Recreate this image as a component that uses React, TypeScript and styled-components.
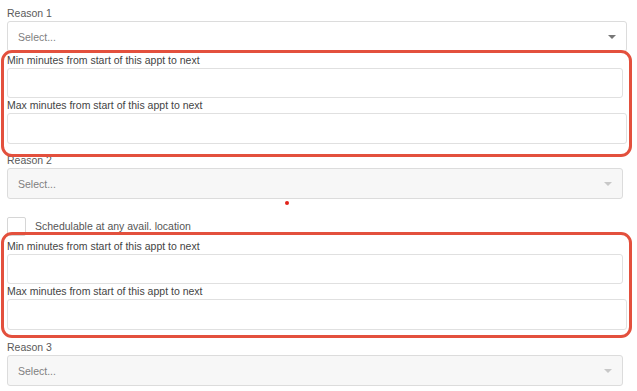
import React from "react";
import styled, { createGlobalStyle } from "styled-components";

const GlobalStyle = createGlobalStyle`
  html, body {
    margin: 0;
    padding: 0;
    background: #fff;
  }
  body {
    font-family: "Liberation Sans", Arial, sans-serif;
  }
`;

interface SelectProps {
  disabled?: boolean;
  width: number;
}

const Select: React.FC<SelectProps> = ({ disabled, width }) => (
  <SelectBox $disabled={disabled} $w={width}>
    <Placeholder>Select...</Placeholder>
    <Caret $disabled={disabled} />
  </SelectBox>
);

interface MinMaxProps {
  top: number;
  bottom: number;
  inputHeight: number;
}

const MinMax: React.FC<MinMaxProps> = ({ top, bottom, inputHeight }) => (
  <Group $top={top} $bottom={bottom}>
    <Label $dark>Min minutes from start of this appt to next</Label>
    <TextInput $w={616} $h={inputHeight} />
    <Label $dark>Max minutes from start of this appt to next</Label>
    <TextInput $w={620} $h={inputHeight + 1} />
  </Group>
);

export default function App() {
  return (
    <>
      <GlobalStyle />
      <Page>
        <Label>Reason 1</Label>
        <Select width={620} />
        <MinMax top={-3} bottom={13} inputHeight={30} />

        <Label $mt={9}>Reason 2</Label>
        <Select width={616} disabled />
        <DotRow>
          <Dot />
        </DotRow>
        <CheckRow>
          <CheckBox />
          <CheckText>Schedulable at any avail. location</CheckText>
        </CheckRow>
        <Spacer />
        <MinMax top={-7} bottom={8} inputHeight={30} />

        <Label $mt={10}>Reason 3</Label>
        <Select width={616} disabled />
      </Page>
    </>
  );
}

const Page = styled.div`
  display: flex;
  flex-direction: column;
  align-items: flex-start;
  width: 637px;
  height: 391px;
  padding: 6px 0 0 7px;
  box-sizing: border-box;
  overflow: hidden;
`;

const Label = styled.div<{ $dark?: boolean; $mt?: number }>`
  font-size: 10.5px;
  line-height: 14px;
  height: 14px;
  margin-top: ${(p) => p.$mt || 0}px;
  margin-bottom: 1px;
  color: ${(p) => (p.$dark ? "#444" : "#5a5a5a")};
  white-space: nowrap;
`;

const SelectBox = styled.div<{ $disabled?: boolean; $w: number }>`
  display: flex;
  align-items: center;
  justify-content: space-between;
  width: ${(p) => p.$w}px;
  height: 31px;
  padding: 0 10px 0 10px;
  box-sizing: border-box;
  border: 1px solid #dcdcdc;
  border-radius: 3px;
  background: ${(p) => (p.$disabled ? "#f7f7f7" : "#fff")};
`;

const Placeholder = styled.span`
  font-size: 10.5px;
  color: #808080;
`;

const Caret = styled.span<{ $disabled?: boolean }>`
  width: 0;
  height: 0;
  border-left: 4px solid transparent;
  border-right: 4px solid transparent;
  border-top: 4px solid ${(p) => (p.$disabled ? "#c8c8c8" : "#777")};
`;

const TextInput = styled.input<{ $w: number; $h: number }>`
  display: block;
  width: ${(p) => p.$w}px;
  height: ${(p) => p.$h}px;
  margin: 0;
  padding: 0 8px;
  box-sizing: border-box;
  border: 1px solid #e0e0e0;
  border-radius: 3px;
  background: #fff;
  outline: none;
`;

const Group = styled.div<{ $top: number; $bottom: number }>`
  position: relative;
  display: flex;
  flex-direction: column;
  margin-top: 1px;

  &::after {
    content: "";
    position: absolute;
    left: -6px;
    right: -5px;
    top: ${(p) => p.$top}px;
    bottom: ${(p) => -p.$bottom}px;
    border: 3.5px solid #e3503d;
    border-radius: 11px;
    pointer-events: none;
  }
`;

const DotRow = styled.div`
  height: 17px;
  display: flex;
  align-items: flex-start;
  padding: 2px 0 0 278px;
  box-sizing: border-box;
`;

const Dot = styled.span`
  width: 4px;
  height: 4px;
  border-radius: 50%;
  background: #e2231a;
`;

const CheckRow = styled.div`
  display: flex;
  align-items: center;
  gap: 9px;
  height: 20px;
`;

const CheckBox = styled.span`
  width: 19px;
  height: 19px;
  box-sizing: border-box;
  border: 1px solid #d6d6d6;
  border-radius: 2px;
  background: #fff;
`;

const CheckText = styled.span`
  font-size: 10.5px;
  color: #555;
`;

const Spacer = styled.div`
  height: 2px;
`;
